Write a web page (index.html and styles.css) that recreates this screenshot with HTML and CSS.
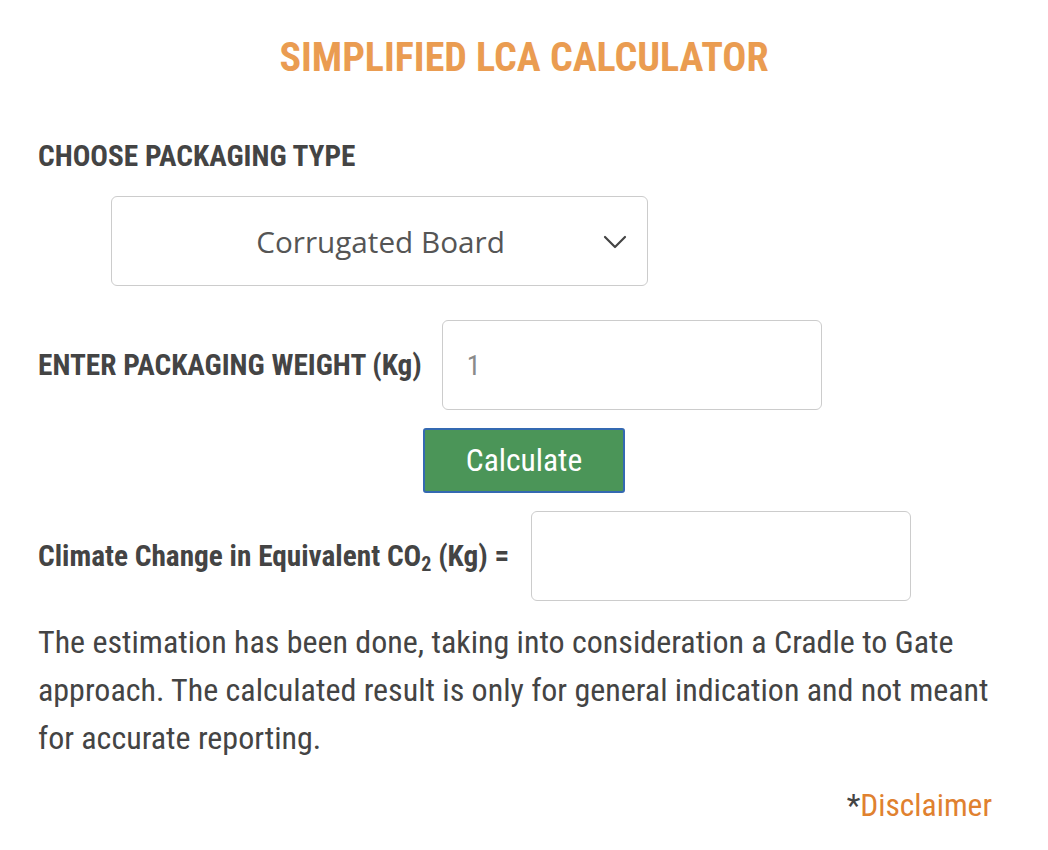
FILE: index.html
```html
<!DOCTYPE html>
<html lang="en">
<head>
    <meta charset="UTF-8">
    <title>Simplified LCA Calculator</title>
    <link rel="stylesheet" href="styles.css">
</head>
<body>

<div class="calculator">
    <h1 class="title">SIMPLIFIED LCA CALCULATOR</h1>

    <div class="field-label">CHOOSE PACKAGING TYPE</div>
    <div class="select-box">
        <span class="select-value">Corrugated Board</span>
        <svg class="chevron" width="26" height="16" viewBox="0 0 26 16">
            <path d="M3 3 L13 13 L23 3" fill="none" stroke="#444" stroke-width="2.2" stroke-linecap="round" stroke-linejoin="round"/>
        </svg>
    </div>

    <div class="row">
        <label class="field-label" for="weight">ENTER PACKAGING WEIGHT (Kg)</label>
        <input class="text-input" id="weight" type="text" placeholder="1">
    </div>

    <div class="button-row">
        <button class="calc-button">Calculate</button>
    </div>

    <div class="row">
        <span class="result-label">Climate Change in Equivalent CO<sub>2</sub> (Kg) =</span>
        <input class="text-input" type="text">
    </div>

    <p class="note">The estimation has been done, taking into consideration a Cradle to Gate approach. The calculated result is only for general indication and not meant for accurate reporting.</p>

    <div class="disclaimer">*<a href="#">Disclaimer</a></div>
</div>

</body>
</html>
```
FILE: styles.css
```css
body {
    margin: 0;
    padding: 0;
    background-color: #ffffff;
    font-family: "Roboto Condensed", "Roboto", sans-serif;
    font-stretch: condensed;
    color: #444444;
}
.calculator {
    padding: 34px 56px 0 38px;
}
.title {
    margin: 0;
    text-align: center;
    font-size: 40px;
    line-height: 48px;
    font-weight: 700;
    color: #ea9c51;
    padding-left: 18px;
}
.field-label {
    display: block;
    margin-top: 57px;
    font-size: 29.3px;
    line-height: 34px;
    font-weight: 700;
    color: #444;
}
.select-box {
    margin: 23px 0 0 73px;
    width: 535px;
    height: 88px;
    border: 1px solid #cccccc;
    border-radius: 6px;
    display: flex;
    align-items: center;
    position: relative;
}
.select-value {
    flex: 1;
    text-align: center;
    font-family: "Open Sans", sans-serif;
    font-stretch: normal;
    font-size: 29.7px;
    color: #555;
    padding-right: 68px;
    padding-left: 70px;
}
.chevron {
    position: absolute;
    right: 19px;
    top: 37px;
}
.row {
    display: flex;
    align-items: center;
    gap: 20px;
    margin-top: 34px;
}
.row .field-label {
    margin-top: 0;
}
.text-input {
    width: 378px;
    height: 88px;
    box-sizing: content-box;
    padding: 0;
    text-indent: 24px;
    border: 1px solid #cccccc;
    border-radius: 6px;
    font-family: "Roboto Condensed", "Roboto", sans-serif;
    font-stretch: condensed;
    font-size: 28px;
    color: #444;
    outline: none;
}
.text-input::placeholder {
    color: #8a8a8a;
}
.button-row {
    display: flex;
    justify-content: center;
    margin-top: 18px;
    padding-left: 18px;
}
.calc-button {
    width: 202px;
    height: 65px;
    background-color: #4b9558;
    border: 2px solid #3469b1;
    border-radius: 3px;
    color: #ffffff;
    font-family: "Roboto Condensed", "Roboto", sans-serif;
    font-stretch: condensed;
    font-size: 31.5px;
    cursor: pointer;
}
.row + .button-row + .row {
    margin-top: 18px;
    gap: 22px;
}
.result-label {
    font-size: 29.3px;
    font-weight: 700;
    color: #444;
}
.result-label sub {
    font-size: 20px;
    vertical-align: -5px;
    line-height: 0;
}
.note {
    margin: 17px 0 0 0;
    font-size: 32px;
    line-height: 48px;
    color: #444;
}
.disclaimer {
    margin-top: 26px;
    text-align: right;
    font-size: 31.5px;
    line-height: 36px;
    color: #444;
}
.disclaimer a {
    color: #e0812f;
    text-decoration: none;
}
```
